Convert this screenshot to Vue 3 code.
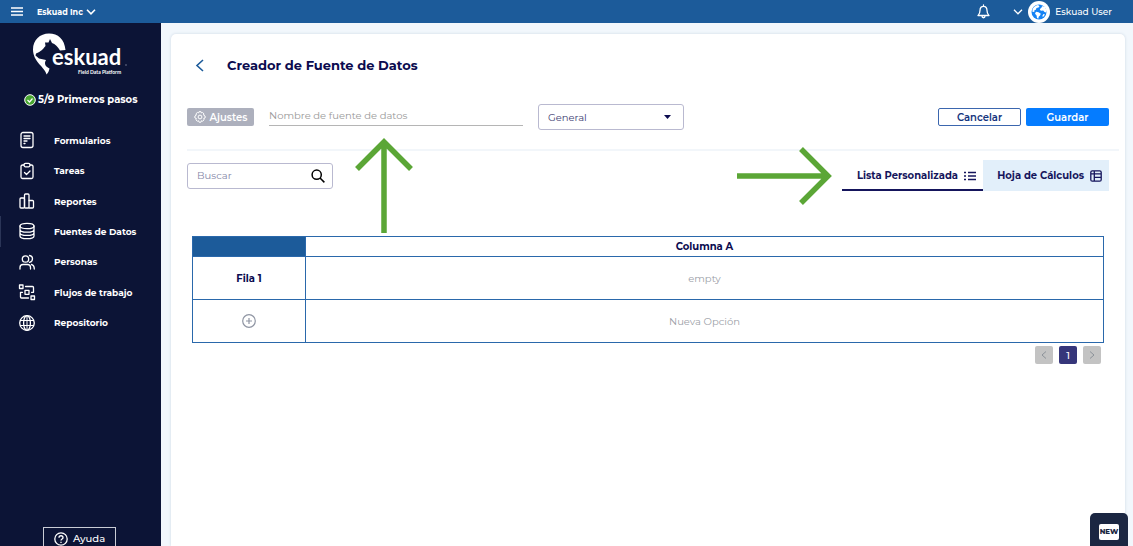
<script setup>
import { ref } from 'vue'

const menu = [
  { label: 'Formularios', icon: 'form' },
  { label: 'Tareas', icon: 'task' },
  { label: 'Reportes', icon: 'chart' },
  { label: 'Fuentes de Datos', icon: 'data', active: true },
  { label: 'Personas', icon: 'people' },
  { label: 'Flujos de trabajo', icon: 'flow' },
  { label: 'Repositorio', icon: 'globe' },
]
const tab = ref('lista')
const name = ref('')
const search = ref('')
const category = ref('General')
</script>

<template>
  <div class="app">
    <header class="topbar">
      <button class="plain" aria-label="Menú">
        <svg width="12" height="9" viewBox="0 0 12 9" stroke="#fff" stroke-width="1.5"><path d="M0 1h12M0 4.5h12M0 8h12" /></svg>
      </button>
      <button class="plain org">
        Eskuad Inc
        <svg width="10" height="6" viewBox="0 0 10 6" fill="none" stroke="#fff" stroke-width="1.6"><path d="M1 .8l4 4 4-4" /></svg>
      </button>
      <button class="plain bell" aria-label="Notificaciones">
        <svg width="13" height="15" viewBox="0 0 13 15" fill="none" stroke="#fff" stroke-width="1.3" stroke-linejoin="round" stroke-linecap="round"><path d="M6.500 1v1M3 6.500C3 3.500 4.500 2.300 6.500 2.300S10 3.500 10 6.500C10 9.500 11 10.300 12 11.500H1C2 10.300 3 9.500 3 6.500ZM5 12c0 2.300 3 2.300 3 0" /></svg>
      </button>
      <button class="plain user">
        <svg width="10" height="6" viewBox="0 0 10 6" fill="none" stroke="#fff" stroke-width="1.3"><path d="M1 .8l4 4 4-4" /></svg>
        <svg class="avatar" width="22" height="22" viewBox="0 0 22 22">
          <circle cx="11" cy="11" r="11" fill="#fff" />
          <circle cx="11" cy="11" r="7.500" fill="#1583f5" />
          <path d="M4.500 8.500C5.500 6 7.500 4.300 10 4l1.500 1.200-1 1.300-2 .5-.7 1.700-1.600.8.300 1.200L4.500 11zM13 4.500l1.500 1.300-1.700 1.200-1 1.800 1.200 1 2.200-.3 1.300 1.500 1.500.5.500-2-1.500-3.500zM8 10.800l2.500.4 2.300 1.600-.8 1.700-1.300 1.200-.4 2-1.300-.7-.4-2.500L7 12.700zM15.500 13l1.500.5-2 2.500-.700-1z" fill="#fff" />
        </svg>
        Eskuad User
      </button>
    </header>

    <div class="body">
      <aside class="sidebar">
        <svg class="logo" width="98" height="44" viewBox="0 0 98 44" role="img" aria-label="eskuad Field Data Platform">
          <path fill="#fff" d="M14.500 41.500C13 34 1 29 1 16.500C1 7 8 .5 17 .5C26 .5 32.500 6 33.500 17L28 17.500C26 14 23 11 20 10L18 6L16.500 9.500L13 9.500L13.500 13C11 16 9 18.500 4 20.500L3.500 22.500L7 25.500L14 27C11.500 31 14 34 17.500 35.500C17 38 16 40 14.500 41.500Z" />
          <text x="20" y="32" class="brand">eskuad</text>
          <text x="46" y="41" class="tagline">Field Data Platform</text>
          <circle cx="94" cy="32" r=".7" fill="#8d93aa" />
        </svg>
        <a href="#" class="steps">
          <svg width="12" height="12" viewBox="0 0 12 12"><circle cx="6" cy="6" r="5.300" fill="#4aa832" stroke="#fff" /><path d="M3.500 6l2 2 3-3.500" fill="none" stroke="#fff" stroke-width="1.200" /></svg>
          5/9 Primeros pasos
        </a>
        <nav class="menu">
          <a v-for="m in menu" :key="m.label" href="#" :class="{ active: m.active }">
            <svg width="18" height="18" viewBox="0 0 18 18" fill="none" stroke="#fff" stroke-width="1.300" stroke-linecap="round" stroke-linejoin="round">
              <template v-if="m.icon === 'form'"><rect x="3" y="1.500" width="12" height="15" rx="2" /><path d="M6 5h6M6 7.500h6M6 10h3M6 12.500h1" /></template>
              <template v-else-if="m.icon === 'task'"><path d="M6 3H4.500Q3 3 3 4.500V15q0 1.500 1.500 1.500h9Q15 16.500 15 15V4.500Q15 3 13.500 3H12" /><rect x="6" y="1.300" width="6" height="3.500" rx="1.500" /><path d="M6.500 10.500l2 2 3.500-3.500" /></template>
              <template v-else-if="m.icon === 'chart'"><rect x="2" y="6" width="4.500" height="10" rx="1" /><rect x="6.500" y="2" width="4.500" height="14" rx="1" /><path d="M11 8.500h3.500q1 0 1 1V15q0 1-1 1H11" /></template>
              <template v-else-if="m.icon === 'data'"><ellipse cx="9" cy="4" rx="7" ry="2.700" /><path d="M2 4v10c0 3.600 14 3.600 14 0V4M2 7.400c0 3.600 14 3.600 14 0M2 10.700c0 3.600 14 3.600 14 0" /></template>
              <template v-else-if="m.icon === 'people'"><circle cx="7.500" cy="6" r="3.200" /><path d="M2 16v-1.500C2 12.500 3.500 11.500 5 11.500h4.500c2 0 3 1 3 3V16M11.500 2.500c4 .500 4 6 0 6.800M13.500 11.500c2 .500 2.800 1.500 2.800 4.500" /></template>
              <template v-else-if="m.icon === 'flow'"><rect x="1.500" y="2" width="3.500" height="3.500" /><rect x="7" y="7.300" width="4" height="4" /><rect x="13" y="13" width="3.500" height="3.500" /><path d="M7.500 3.500h7q1 0 1 1v4.800h-2M4.500 9.300h-2V14q0 1 1 1h7" /></template>
              <template v-else><circle cx="9" cy="9" r="7.300" /><ellipse cx="9" cy="9" rx="3.400" ry="7.300" /><path d="M2.500 6.500h13M2.500 11.500h13M9 2v14" stroke-width="1" /></template>
            </svg>
            {{ m.label }}
          </a>
        </nav>
        <button class="help">
          <svg width="14" height="14" viewBox="0 0 14 14" fill="none" stroke="#fff" stroke-width="1.300"><circle cx="7" cy="7" r="6.200" /><path d="M5 5.700c0-2.600 4-2.600 4 0C9 7 7 7 7 8.500M7 9.700v1.300" /></svg>
          Ayuda
        </button>
      </aside>

      <main class="card">
        <div class="heading">
          <button class="plain" aria-label="Volver">
            <svg width="9" height="13" viewBox="0 0 9 13" fill="none" stroke="#1c5b9a" stroke-width="1.600"><path d="M8 1L2 6.500 8 12" /></svg>
          </button>
          <h1>Creador de Fuente de Datos</h1>
        </div>

        <div class="form-row">
          <button class="btn settings">
            <svg width="12" height="12" viewBox="0 0 12 12" fill="none" stroke="#fff" stroke-linejoin="round"><path d="M5 .7h2l.4 1.200 1.200-.4 1.400 1.400-.5 1.200 1.600.9v2l-1.400.5.4 1.300-1.400 1.400-1.200-.5-.5 1.500H5l-.5-1.500-1.200.5-1.400-1.400.5-1.300L.9 7V5l1.500-.9-.5-1.200 1.400-1.400 1.300.4z" /><circle cx="6" cy="6" r="1.900" /></svg>
            Ajustes
          </button>
          <input v-model="name" class="name" type="text" aria-label="Nombre de fuente de datos" placeholder="Nombre de fuente de datos" />
          <div class="select">
            <select v-model="category" aria-label="Categoría"><option>General</option></select>
            <svg width="7" height="4" viewBox="0 0 7 4"><path d="M0 0h7L3.500 4z" fill="#0b0b4f" /></svg>
          </div>
          <div class="actions">
            <button class="btn cancel">Cancelar</button>
            <button class="btn save">Guardar</button>
          </div>
        </div>

        <div class="tools">
          <div class="search">
            <input v-model="search" type="text" aria-label="Buscar" placeholder="Buscar" />
            <svg width="14" height="14" viewBox="0 0 14 14" fill="none" stroke="#000" stroke-width="1.500"><circle cx="5.700" cy="5.700" r="4.600" /><path d="M9 9l4.400 4.400" /></svg>
          </div>
          <div class="tabs" role="tablist">
            <button role="tab" :aria-selected="tab === 'lista'" :class="{ on: tab === 'lista' }" @click="tab = 'lista'">
              Lista Personalizada
              <svg width="12" height="10" viewBox="0 0 12 10" stroke="#15155c" stroke-width="1.500"><path d="M0 1.500h2M4 1.500h8M0 5h2M4 5h8M0 8.500h2M4 8.500h8" /></svg>
            </button>
            <button role="tab" :aria-selected="tab === 'hoja'" :class="{ on: tab === 'hoja' }" @click="tab = 'hoja'">
              Hoja de Cálculos
              <svg width="12" height="12" viewBox="0 0 12 12" fill="none" stroke="#15155c" stroke-width="1.300"><rect x=".8" y=".8" width="10.400" height="10.400" rx="1.500" /><path d="M1 3.800h10M4.300 1v10M4.300 7.300H11" /></svg>
            </button>
          </div>
        </div>

        <div class="grid">
          <table>
            <thead>
              <tr><th class="corner" scope="col"></th><th scope="col">Columna A</th></tr>
            </thead>
            <tbody>
              <tr><th scope="row">Fila 1</th><td>empty</td></tr>
              <tr>
                <td>
                  <button class="plain add" aria-label="Agregar fila">
                    <svg width="14" height="14" viewBox="0 0 14 14" fill="none" stroke="#8f95a3" stroke-width="1.200"><circle cx="7" cy="7" r="6.300" /><path d="M7 4v6M4 7h6" /></svg>
                  </button>
                </td>
                <td>Nueva Opción</td>
              </tr>
            </tbody>
          </table>
          <div class="pager">
            <button aria-label="Página anterior"><svg width="6" height="8" viewBox="0 0 6 8" fill="none" stroke="#8c9299"><path d="M5 .5L1 4l4 3.500" /></svg></button>
            <button class="current">1</button>
            <button aria-label="Página siguiente"><svg width="6" height="8" viewBox="0 0 6 8" fill="none" stroke="#8c9299"><path d="M1 .5L5 4 1 7.500" /></svg></button>
          </div>
        </div>
      </main>
    </div>

    <svg class="arrow up" width="60" height="96" viewBox="0 0 60 96" fill="none" stroke="#5ba636" stroke-width="5.500"><path d="M30 96V5M3 32L30 5l27 27" /></svg>
    <svg class="arrow right" width="96" height="60" viewBox="0 0 96 60" fill="none" stroke="#5ba636" stroke-width="5.500"><path d="M0 30h91M64 3l27 27-27 27" /></svg>
    <button class="new"><span>NEW</span></button>
  </div>
</template>

<style>
body { margin: 0; }
</style>

<style scoped>
* { box-sizing: border-box; }
.app {
  position: relative;
  display: flex;
  flex-direction: column;
  height: 100vh;
  overflow: hidden;
  font-family: Montserrat, Inter, "Open Sans", sans-serif;
  font-size: 10px;
  color: #0b0b4f;
  background: #f2f7fc;
}
button, input, select { font: inherit; color: inherit; }
button { cursor: pointer; }
.plain { display: flex; align-items: center; padding: 0; border: 0; background: none; }
.topbar {
  display: flex;
  align-items: center;
  flex: none;
  height: 23px;
  padding: 0 21px 0 11px;
  color: #fff;
  background: #1c5b9a;
}
.org { gap: 3px; margin-left: 14px; font-size: 8px; font-weight: 700; }
.bell { margin-left: auto; margin-right: 23px; }
.user { gap: 5px; font-size: 9px; font-weight: 500; }
.body { display: flex; flex: 1; min-height: 0; }
.sidebar {
  display: flex;
  flex-direction: column;
  flex: none;
  width: 161px;
  color: #fff;
  background: #0c1436;
}
.logo { flex: none; margin: 10px 0 0 32px; }
.brand { fill: #fff; font: 700 22px Lato, sans-serif; }
.tagline { fill: #fff; font: 700 5px Lato, sans-serif; }
.steps {
  display: flex;
  align-items: center;
  gap: 2px;
  margin: 15px 0 0 24px;
  line-height: 16px;
  font-weight: 700;
  color: inherit;
  text-decoration: none;
}
.menu { display: grid; grid-auto-rows: 1fr; height: 213px; margin-top: 17px; }
.menu a {
  display: flex;
  align-items: center;
  gap: 18px;
  padding-left: 18px;
  color: inherit;
  font-size: 9px;
  font-weight: 700;
  text-decoration: none;
}
.menu .active { box-shadow: inset 1px 0 #2b3557; }
.help {
  display: flex;
  align-items: center;
  justify-content: center;
  gap: 5px;
  height: 19px;
  width: 73px;
  margin: auto 0 0 43px;
  padding: 3px 0 0;
  border: 1px solid #c9ccd6;
  border-bottom: 0;
  font-weight: 500;
  background: none;
}
.card {
  flex: 1;
  min-width: 0;
  margin: 11px 8px 0 10px;
  padding: 16px 16px 0;
  border-radius: 5px 5px 0 0;
  background: #fff;
  box-shadow: 0 0 3px #cbd6e2;
}
.heading { display: flex; align-items: center; gap: 23px; height: 30px; padding-left: 8px; }
h1 { margin: 0; font-size: 13px; line-height: 18px; font-weight: 700; }
.form-row {
  display: flex;
  align-items: center;
  height: 71px;
  margin-right: -10px;
  padding: 5px 10px 0 0;
  border-bottom: 2px solid #f2f6fa;
}
.btn {
  display: flex;
  align-items: center;
  justify-content: center;
  height: 18px;
  padding: 0;
  border: 0;
  border-radius: 2px;
  font-weight: 600;
}
.settings { gap: 4px; width: 67px; color: #fff; background: #adb0bd; }
.name {
  flex: 0 1 254px;
  min-width: 0;
  height: 18px;
  margin: 0 15px;
  padding: 0 0 2px;
  border: 0;
  border-bottom: 1px solid #b5b5b5;
  outline: 0;
  background: none;
}
.name::placeholder { color: #999; opacity: 1; }
.select, .search {
  display: flex;
  align-items: center;
  width: 146px;
  height: 26px;
  border: 1px solid #b9b9d0;
  border-radius: 3px;
}
.select { position: relative; }
.select select {
  width: 100%;
  height: 100%;
  padding: 0 9px;
  border: 0;
  appearance: none;
  background: none;
  color: #3c3c72;
}
.select svg { position: absolute; right: 12px; pointer-events: none; }
.actions { display: flex; gap: 5px; margin-left: auto; }
.actions .btn { width: 83px; }
.cancel { border: 1px solid #3b66ae; color: #15357e; background: #fff; }
.save { color: #fff; background: #057cff; }
.tools { display: flex; align-items: center; justify-content: space-between; margin-top: 9px; }
.search { padding: 0 7px 0 9px; }
.search input { flex: 1; min-width: 0; padding: 0; border: 0; outline: 0; background: none; }
.search input::placeholder { color: #8588a8; opacity: 1; }
.tabs { display: flex; }
.tabs button {
  display: flex;
  align-items: center;
  justify-content: flex-end;
  gap: 6px;
  width: 126px;
  height: 31px;
  padding: 0 7px 0 0;
  border: 0;
  font-weight: 700;
  color: #15155c;
  background: #e2effa;
}
.tabs .on { width: 141px; border-bottom: 2px solid #15155c; padding-top: 2px; background: #fff; }
.grid { margin: 45px 5px 0; }
table { width: 100%; table-layout: fixed; border-collapse: collapse; }
th, td { height: 43px; padding: 0; border: 1px solid #2a68ab; text-align: center; }
td { color: #9ba0a7; }
thead th { height: 20px; }
th { font-weight: 700; }
.corner { width: 113px; background: #1c5b9a; }
.add { margin: auto; }
.pager { display: flex; justify-content: flex-end; gap: 6px; margin: 3px 3px 0; }
.pager button {
  display: flex;
  align-items: center;
  justify-content: center;
  width: 18px;
  height: 18px;
  padding: 0;
  border: 0;
  border-radius: 2px;
  background: #c3c3c3;
}
.pager .current { color: #fff; background: #36367a; font-weight: 500; }
.arrow { position: absolute; pointer-events: none; }
.up { left: 354px; top: 137px; }
.right { left: 737px; top: 146px; }
.new {
  position: absolute;
  right: 5px;
  bottom: 0;
  display: flex;
  align-items: center;
  justify-content: center;
  width: 38px;
  height: 33px;
  padding: 4px 0 0;
  border: 0;
  border-radius: 5px 5px 0 0;
  background: #1b2742;
}
.new span {
  padding: 2px 1px;
  border-radius: 2px;
  font-size: 7px;
  line-height: 12px;
  font-weight: 800;
  color: #1b2742;
  background: #fff;
}
</style>
